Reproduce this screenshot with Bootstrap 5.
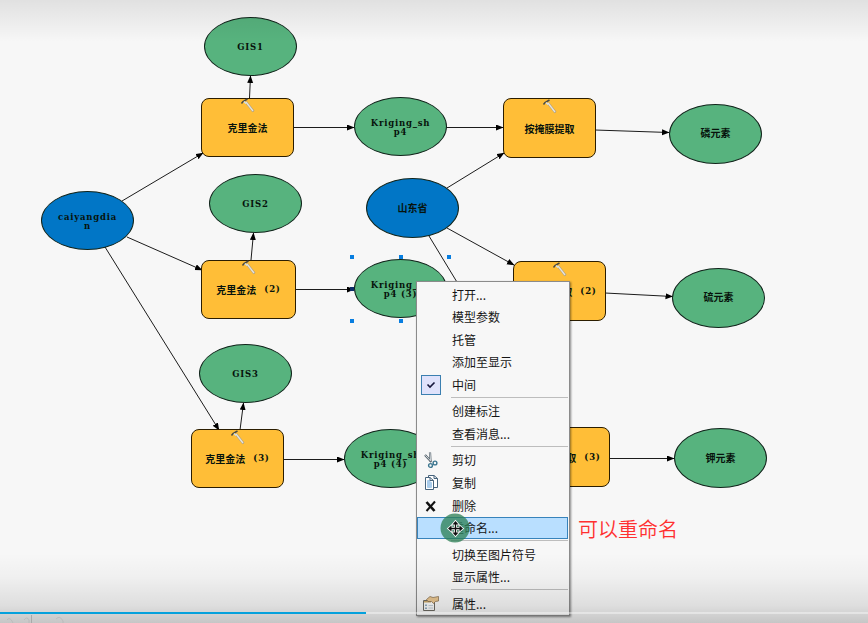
<!DOCTYPE html>
<html lang="zh-CN">
<head>
  <meta charset="UTF-8">
  <title>模型构建器</title>
  <link href="https://cdn.jsdelivr.net/npm/bootstrap@5.3.0/dist/css/bootstrap.min.css" rel="stylesheet">
  <style>
    body {
      background-color: #f7f7f7;
      font-family: "Liberation Sans", "Noto Sans CJK SC", sans-serif;
    }
    .model-canvas {
      width: 868px;
      height: 623px;
    }
    /* diagram nodes */
    .node {
      position: absolute;
      width: 93px;
      height: 59px;
      padding-top: 2px;
      border: 1px solid #10231a;
      font: bold 10px/9px "Noto Sans CJK SC", sans-serif;
      color: #07130c;
      white-space: pre;
    }
    .latin {
      font: bold 8.5px/9px "DejaVu Serif", serif;
      letter-spacing: .8px;
    }
    .node-data { background-color: #57b37e; border-radius: 50%; }
    .node-input { background-color: #0176c6; border-radius: 50%; }
    .node-tool { padding-top: 0; background-color: #ffbe37; border-radius: 8px; border-color: #2b1d00; }
    #caiyang { left: 41px; top: 191px; }
    #gis1 { left: 204px; top: 17px; }
    #gis2 { left: 209px; top: 174px; }
    #gis3 { left: 199px; top: 344px; }
    #krig1 { left: 201px; top: 98px; }
    #krig2 { left: 201px; top: 260px; width: 95px; }
    #krig3 { left: 191px; top: 429px; }
    #shp1 { left: 354px; top: 97px; }
    #shp2 { left: 354px; top: 259px; }
    #shp3 { left: 344px; top: 429px; }
    #shandong { left: 366px; top: 178px; height: 60px; padding: 0 0 2px; }
    #mask1 { left: 503px; top: 98px; height: 60px; }
    #mask2 { left: 513px; top: 261px; height: 60px; }
    #mask3 { left: 517px; top: 427px; height: 60px; }
    #lin { left: 669px; top: 104px; height: 60px; padding: 0 0 3px; }
    #liu { left: 672px; top: 268px; height: 60px; padding: 0 0 3px; }
    #jia { left: 674px; top: 428px; height: 60px; padding: 0 0 2px; }

    /* context menu */
    .ctx-menu {
      left: 416px;
      top: 281px;
      width: 154px;
      height: 335px;
      min-width: 0;
      padding: 1.3px 1px 0 0;
      border: 1px solid #8b8b8b;
      border-radius: 0;
      background-color: #f7f7f7;
      box-shadow: 1px 1px 2px rgba(0,0,0,.45);
      z-index: 10;
    }
    .ctx-menu .dropdown-item {
      height: 22.6px;
      padding: 0;
      font: 12px/20px "Noto Sans CJK SC", sans-serif;
      color: #151515;
      border: 1px solid transparent;
    }
    .ctx-menu .dropdown-item.picked {
      background-color: #b9dfff;
      border-color: #3783bb;
    }
    .ctx-menu .dropdown-divider {
      margin: 1px 0 1.8px 34px;
      border-top: 1px solid #bdbdbd;
      opacity: 1;
    }
    .ctx-icon { width: 34px; }
    .ctx-check {
      width: 20px;
      height: 20px;
      margin-left: 3px;
      background-color: #dfe2fb;
      border: 1px solid #3b7fb0;
    }

    .pointer { left: 440px; top: 513px; z-index: 12; }
    .note {
      left: 578px;
      top: 514px;
      font: 350 20px/29px "Noto Sans CJK SC", sans-serif;
      color: #ff3030;
      z-index: 30;
    }
    /* player chrome laid over the frame */
    .shade-top { height: 42px; background: linear-gradient(rgba(0,0,0,.09), rgba(0,0,0,.05) 45%, rgba(0,0,0,0)); z-index: 20; }
    .shade-bottom { height: 70px; background: linear-gradient(rgba(0,0,0,0), rgba(0,0,0,.03) 35%, rgba(0,0,0,.1) 75%, rgba(0,0,0,.2)); z-index: 20; }
    .seek-bar {
      bottom: 9px;
      height: 2px;
      border-radius: 0;
      background-color: rgba(255,255,255,.4);
      z-index: 21;
    }
    .seek-bar .progress-bar { width: 366px; background-color: #05a1dc; }
    .ghost { left: 0; bottom: 0; z-index: 22; }
  </style>
</head>
<body class="overflow-hidden">
  <main class="model-canvas position-relative overflow-hidden">

    <!-- connectors -->
    <svg class="position-absolute top-0 start-0" width="868" height="623" fill="none" stroke="#1c1c1c" stroke-width="1">
      <defs>
        <marker id="tip" markerWidth="8" markerHeight="7" refX="7" refY="3" orient="auto" markerUnits="userSpaceOnUse">
          <path d="M0 0L7.5 3L0 6Z" fill="#000" stroke="none"/>
        </marker>
      </defs>
      <g marker-end="url(#tip)">
        <path d="M249.500 98L250.500 76"/>
        <path d="M122 201L203 153"/>
        <path d="M127 237L202 270"/>
        <path d="M105 247L219 430"/>
        <path d="M293 127.500H354"/>
        <path d="M446 127.500H503"/>
        <path d="M447 188L504 153"/>
        <path d="M447 228L514 265"/>
        <path d="M429 236L545 427"/>
        <path d="M595 130L669 132.500"/>
        <path d="M605 293L672.500 296.500"/>
        <path d="M610 458.500H674"/>
        <path d="M251 260L253.500 233"/>
        <path d="M240 430L243.500 403"/>
        <path d="M295 289.500H354"/>
        <path d="M284 459.500H344"/>
      </g>
    </svg>

    <div id="caiyang" class="node node-input d-flex align-items-center justify-content-center text-center"><span class="latin">caiyangdia
n</span></div>
    <div id="gis1" class="node node-data d-flex align-items-center justify-content-center"><span class="latin">GIS1</span></div>
    <div id="gis2" class="node node-data d-flex align-items-center justify-content-center"><span class="latin">GIS2</span></div>
    <div id="gis3" class="node node-data d-flex align-items-center justify-content-center"><span class="latin">GIS3</span></div>
    <div id="krig1" class="node node-tool d-flex align-items-center justify-content-center">克里金法</div>
    <div id="krig2" class="node node-tool d-flex align-items-center justify-content-center">克里金法<span class="latin ms-2">(2)</span></div>
    <div id="krig3" class="node node-tool d-flex align-items-center justify-content-center">克里金法<span class="latin ms-2">(3)</span></div>
    <div id="shp1" class="node node-data d-flex align-items-center justify-content-center text-center"><span class="latin">Kriging_sh
p4</span></div>
    <div id="shp2" class="node node-data d-flex align-items-center justify-content-center text-center"><span class="latin">Kriging_sh
p4 (3)</span></div>
    <div id="shp3" class="node node-data d-flex align-items-center justify-content-center text-center"><span class="latin">Kriging_sh
p4 (4)</span></div>
    <div id="shandong" class="node node-input d-flex align-items-center justify-content-center">山东省</div>
    <div id="mask1" class="node node-tool d-flex align-items-center justify-content-center">按掩膜提取</div>
    <div id="mask2" class="node node-tool d-flex align-items-center justify-content-center">按掩膜提取<span class="latin ms-2">(2)</span></div>
    <div id="mask3" class="node node-tool d-flex align-items-center justify-content-center">按掩膜提取<span class="latin ms-2">(3)</span></div>
    <div id="lin" class="node node-data d-flex align-items-center justify-content-center">磷元素</div>
    <div id="liu" class="node node-data d-flex align-items-center justify-content-center">硫元素</div>
    <div id="jia" class="node node-data d-flex align-items-center justify-content-center">钾元素</div>

    <!-- tool hammers and selection handles -->
    <svg class="position-absolute top-0 start-0" width="868" height="623">
      <defs>
        <g id="hammer" fill="none">
          <path d="M5 4L12.500 13.500" stroke="#a39a88" stroke-width="2.400"/>
          <path d="M5 4L12 13" stroke="#e9e4d8" stroke-width="1.400"/>
          <path d="M.5 5.500L2 3.500L6.500 1" stroke="#4a4a44" stroke-width="1.500"/>
          <path d="M3 3.500L5 5.500" stroke="#d5e2ea" stroke-width="1.500"/>
        </g>
      </defs>
      <use href="#hammer" x="241" y="98"/>
      <use href="#hammer" x="242" y="260"/>
      <use href="#hammer" x="231" y="430"/>
      <use href="#hammer" x="543" y="99"/>
      <use href="#hammer" x="553" y="262"/>
      <g fill="#087ee0">
        <path d="M350 255h4v4h-4zM399 255h4v4h-4zM447 255h4v4h-4zM350 319h4v4h-4zM399 319h4v4h-4z"/>
        <path d="M350 287h4v4h-4z" fill="#0a2a66"/>
      </g>
    </svg>

    <div class="ctx-menu dropdown-menu show d-block">
      <div class="dropdown-item d-flex align-items-center"><span class="ctx-icon"></span>打开...</div>
      <div class="dropdown-item d-flex align-items-center"><span class="ctx-icon"></span>模型参数</div>
      <div class="dropdown-item d-flex align-items-center"><span class="ctx-icon"></span>托管</div>
      <div class="dropdown-item d-flex align-items-center"><span class="ctx-icon"></span>添加至显示</div>
      <div class="dropdown-item d-flex align-items-center">
        <span class="ctx-icon d-flex"><span class="ctx-check d-flex align-items-center justify-content-center">
          <svg width="10" height="8" fill="none" stroke="#17173c" stroke-width="1.600"><path d="M1.500 3.500L4 6L8.500 1.500"/></svg>
        </span></span>中间
      </div>
      <hr class="dropdown-divider">
      <div class="dropdown-item d-flex align-items-center"><span class="ctx-icon"></span>创建标注</div>
      <div class="dropdown-item d-flex align-items-center"><span class="ctx-icon"></span>查看消息...</div>
      <hr class="dropdown-divider">
      <div class="dropdown-item d-flex align-items-center">
        <span class="ctx-icon d-flex ps-1"><svg width="18" height="18" fill="none">
          <path d="M3 4L9.500 11M8 1.500L8.500 11" stroke="#54616a" stroke-width="2.200"/>
          <path d="M3.300 4.300L9 10.300M8 2L8.500 9.500" stroke="#e3e9ec" stroke-width=".9"/>
          <circle cx="8.500" cy="14.500" r="1.900" stroke="#3d7790" stroke-width="1.400"/>
          <circle cx="13" cy="12" r="1.900" stroke="#3d7790" stroke-width="1.400"/>
        </svg></span>剪切
      </div>
      <div class="dropdown-item d-flex align-items-center">
        <span class="ctx-icon d-flex ps-1"><svg width="18" height="18" stroke="#46637c">
          <path d="M6.500 1.500H12L15.500 4.500V13.500H6.500Z" fill="#fff"/>
          <path d="M12 1.500V4.500H15.500" fill="none"/>
          <path d="M3.500 3.500H8L11.500 6.500V15.500H3.500Z" fill="#fff"/>
          <path d="M5.500 6.500H8V8.500H9.500V13.500H5.500Z" fill="#a9cceb" stroke="#a9cceb"/>
          <path d="M8 3.500V6.500H11.500" fill="none"/>
        </svg></span>复制
      </div>
      <div class="dropdown-item d-flex align-items-center">
        <span class="ctx-icon d-flex ps-1"><svg width="18" height="18" stroke="#111" fill="none">
          <path d="M4.500 5L12.500 14" stroke-width="2.600"/><path d="M13 4.500L4.500 14" stroke-width="2"/>
        </svg></span>删除
      </div>
      <div class="dropdown-item picked d-flex align-items-center"><span class="ctx-icon"></span>重命名...</div>
      <hr class="dropdown-divider">
      <div class="dropdown-item d-flex align-items-center"><span class="ctx-icon"></span>切换至图片符号</div>
      <div class="dropdown-item d-flex align-items-center"><span class="ctx-icon"></span>显示属性...</div>
      <hr class="dropdown-divider">
      <div class="dropdown-item d-flex align-items-center">
        <span class="ctx-icon d-flex ps-1"><svg width="18" height="18">
          <path d="M1.500 5.500H12.500V15.500H1.500Z" fill="#fbfbfb" stroke="#6d6a62"/>
          <path d="M2 6H9V7.500H2Z" fill="#c9a86a"/>
          <path d="M3 9.500h2v1.500h-2zM3 12.500h2v1.500h-2z" fill="#8fabc0"/>
          <path d="M6.500 10.500H11M6.500 13H11" stroke="#c4d0d8"/>
          <path d="M4.500 4.500L8 1.500L11 2.500L16.500 1.500V6L13.500 6.500L11.500 8.500L9.500 6.500L6 6.500Z" fill="#e9c691" stroke="#80684a" stroke-width=".7"/>
        </svg></span>属性...
      </div>
    </div>

    <!-- move cursor with click halo -->
    <svg class="pointer position-absolute" width="30" height="30">
      <circle cx="15" cy="15" r="14.500" fill="#2d8055" fill-opacity=".76"/>
      <g stroke="#fff" stroke-width="3.200"><path d="M10 15.500H21M15.500 10V21"/></g>
      <path d="M15.500 8L18.500 11.500H12.500ZM15.500 23L12.500 19.500H18.500ZM8 15.500L11.500 12.500V18.500ZM23 15.500L19.500 12.500V18.500Z" fill="#111" stroke="#fff" stroke-width="1.600" paint-order="stroke"/>
      <path d="M10 15.500H21M15.500 10V21" stroke="#111" stroke-width="1.300"/>
    </svg>

    <div class="note position-absolute">可以重命名</div>

    <div class="shade-top position-absolute top-0 start-0 w-100"></div>
    <div class="shade-bottom position-absolute bottom-0 start-0 w-100"></div>
    <div class="seek-bar progress position-absolute start-0 w-100"><div class="progress-bar"></div></div>
    <svg class="ghost position-absolute" width="70" height="8" fill="none" stroke="#b3b3b3">
      <path d="M31.500 0V8" stroke="#a9a9a9"/>
      <path d="M7 5q3-4 6 3M24 5q3-4 5 0v3M56 4q4-4 7 2v2" opacity=".6"/>
    </svg>
  </main>
  <script src="https://cdn.jsdelivr.net/npm/bootstrap@5.3.0/dist/js/bootstrap.bundle.min.js"></script>
</body>
</html>
